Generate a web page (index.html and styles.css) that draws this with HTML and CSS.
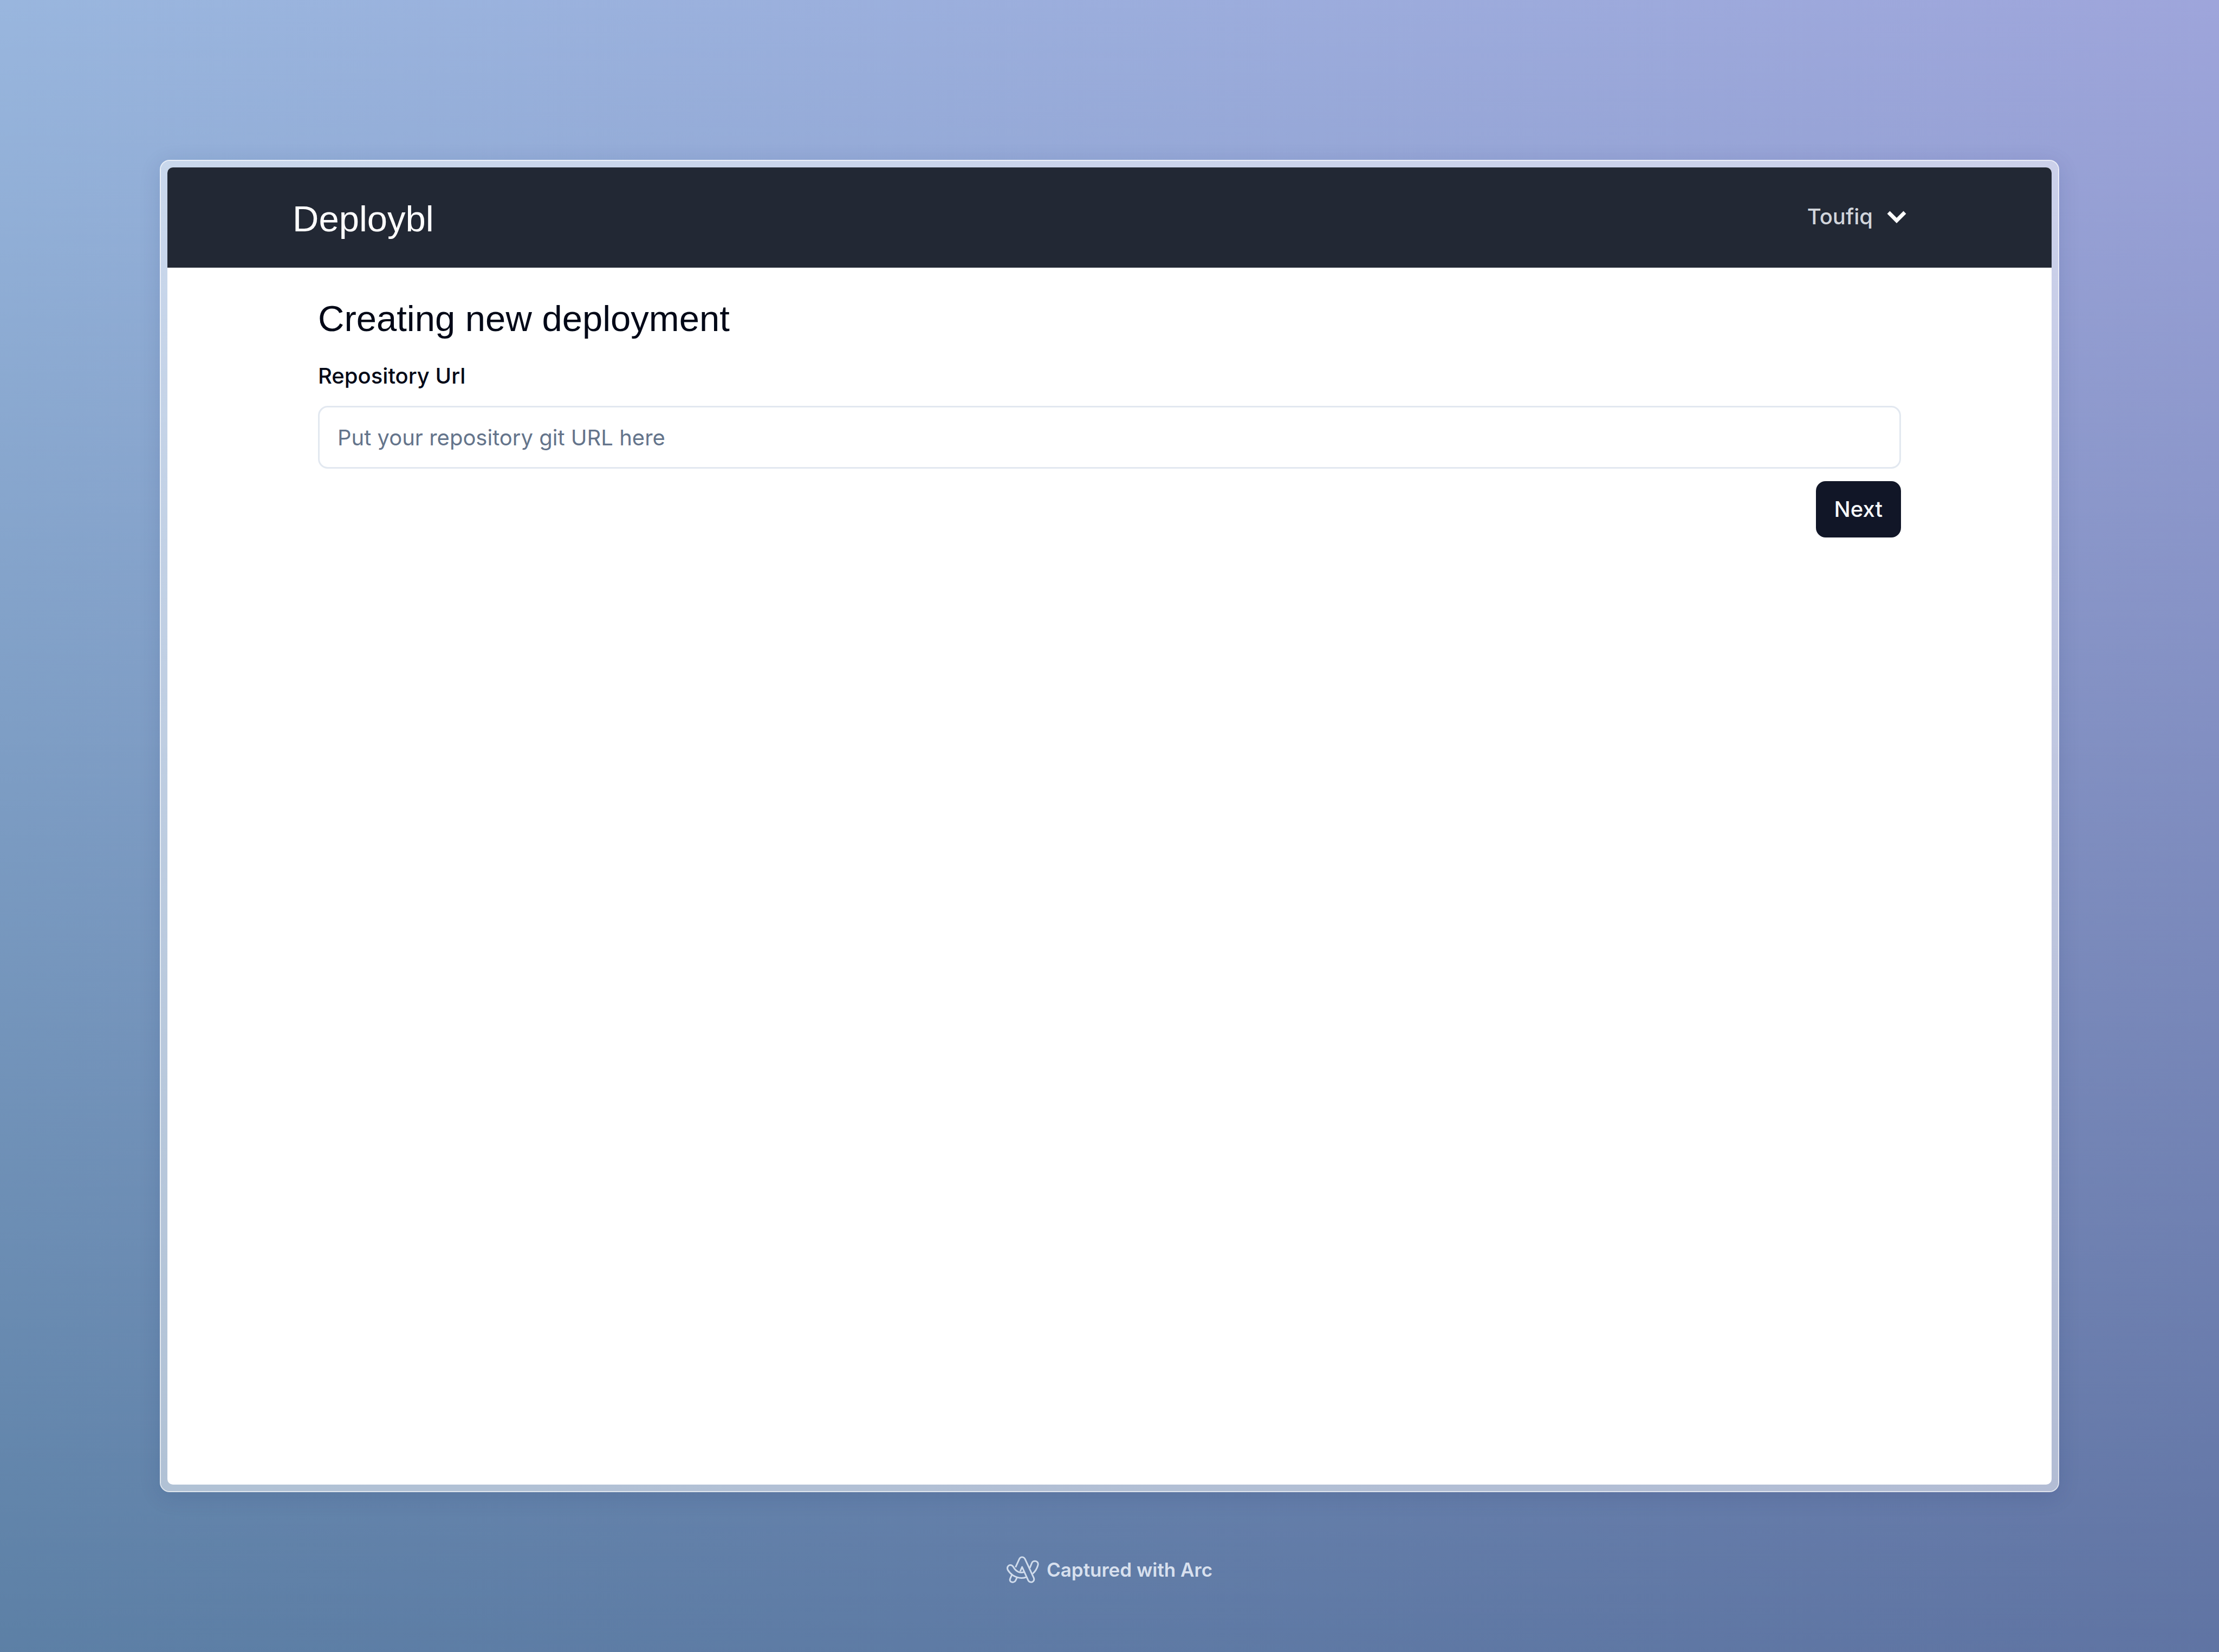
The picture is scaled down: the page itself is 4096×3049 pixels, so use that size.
FILE: index.html
```html
<!DOCTYPE html>
<html lang="en">
<head>
<meta charset="utf-8">
<meta name="viewport" content="width=device-width, initial-scale=1">
<title>Deploybl</title>
<link rel="stylesheet" href="styles.css">
</head>
<body>
<div class="frame">
  <div class="app">
    <header class="navbar">
      <a class="brand" href="#">Deploybl</a>
      <button class="account" type="button">
        Toufiq
        <svg class="chevron" viewBox="0 0 36 24" aria-hidden="true"><path d="M3 4 18 19 33 4"/></svg>
      </button>
    </header>
    <main class="content">
      <h1 class="title">Creating new deployment</h1>
      <form class="form">
        <label class="label" for="repo">Repository Url</label>
        <input class="input" id="repo" type="text" placeholder="Put your repository git URL here">
        <button class="next" type="button">Next</button>
      </form>
    </main>
  </div>
</div>
<footer class="credit">
  <svg class="arc" viewBox="57 73 222 186" aria-hidden="true">
    <path d="M118 150 143 95Q149 80 163 80Q177 80 184 95L243 222Q248 234 242 243Q236 252 225 252Q211 252 205 240L163 148L150 178"/>
    <path d="M194 217Q178 224 160 224Q128 222 100 205Q76 188 65 168Q58 152 68 141Q78 131 90 136Q99 140 104 149Q115 171 137 181Q158 189 177 182"/>
    <path d="M92 203 82 226Q76 240 84 247Q92 254 103 252Q113 250 118 241L128 220"/>
    <path d="M216 155 229 122Q235 107 251 107Q264 108 270 117Q275 125 271 138Q261 171 236 194"/>
  </svg>
  <span>Captured with Arc</span>
</footer>
</body>
</html>
```
FILE: styles.css
```css
* {
  box-sizing: border-box;
}

body {
  margin: 0;
  min-height: 100vh;
  display: flex;
  flex-direction: column;
  padding: 295px 295px 0;
  font-family: Inter, "Liberation Sans", sans-serif;
  font-size: 40px;
  line-height: 56px;
  color: #020817;
  background:
    linear-gradient(180deg, #fff, #9ab3be),
    linear-gradient(90deg, #99b6de, #9ea5db);
  background-blend-mode: multiply;
}

button,
input {
  font: inherit;
}

.frame {
  flex: 1;
  display: flex;
  padding: 12px;
  border: 2px solid rgba(255, 255, 255, 0.8);
  border-radius: 18px;
  background: rgba(255, 255, 255, 0.5);
  background-clip: padding-box;
  box-shadow: 0 8px 40px rgba(20, 30, 90, 0.12);
}

.app {
  flex: 1;
  overflow: hidden;
  border-radius: 10px;
  background: #fff;
}

.navbar {
  display: flex;
  justify-content: space-between;
  align-items: center;
  height: 185px;
  padding: 4px 268px 0 231px;
  background: #222834;
}

.brand,
.title {
  font-family: "Liberation Sans", Arial, sans-serif;
  font-size: 67px;
  font-weight: 400;
  line-height: 80px;
}

.brand {
  color: #fff;
  text-decoration: none;
}

.account {
  display: flex;
  align-items: center;
  gap: 26px;
  padding: 0 0 8px;
  border: 0;
  background: none;
  font-weight: 500;
  color: #d1d5db;
  cursor: pointer;
}

.chevron {
  width: 36px;
  height: 24px;
  fill: none;
  stroke: #fff;
  stroke-width: 7;
}

.content {
  padding: 54px 278px;
}

.title {
  margin: 0;
}

.form {
  display: flex;
  flex-direction: column;
}

.label {
  margin-top: 38px;
  font-weight: 500;
}

.input {
  height: 116px;
  margin-top: 27px;
  padding: 0 33px;
  border: 3px solid #e2e8f0;
  border-radius: 18px;
  background: #fff;
  color: #020817;
}

.input::placeholder {
  color: #64748b;
  opacity: 1;
}

.next {
  align-self: flex-end;
  height: 104px;
  margin-top: 23px;
  padding: 0 34px;
  border: 0;
  border-radius: 18px;
  background: #111627;
  color: #f8fafc;
  font-weight: 500;
  cursor: pointer;
}

.credit {
  height: 295px;
  display: flex;
  align-items: center;
  justify-content: center;
  gap: 14px;
  padding-bottom: 10px;
  font-size: 35px;
  font-weight: 600;
  line-height: 40px;
  color: #d8e0ee;
}

.arc {
  width: 60px;
  height: 50px;
  fill: none;
  stroke: #d0dcec;
  stroke-width: 11;
  stroke-linejoin: round;
}
```
